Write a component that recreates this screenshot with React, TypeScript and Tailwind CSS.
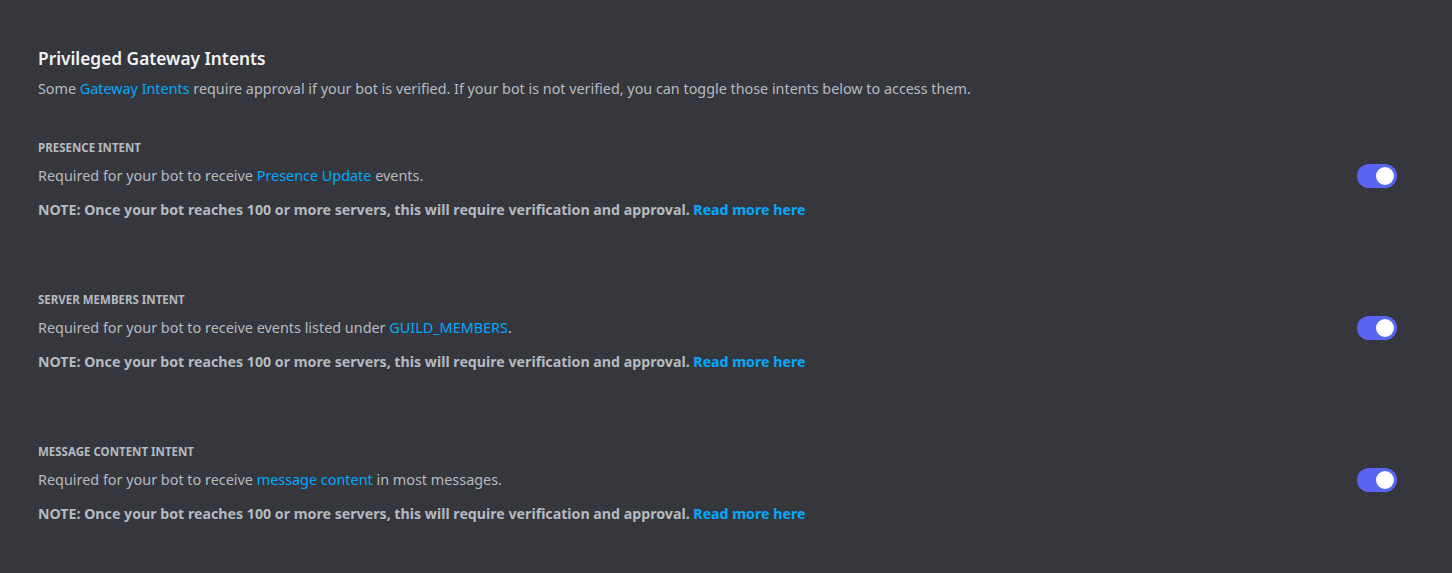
import React from "react";

const Toggle = () => (
  <div className="w-10 h-6 rounded-full bg-[#5865f2] flex items-center justify-end px-[3px] shrink-0">
    <div className="w-[18px] h-[18px] rounded-full bg-white" />
  </div>
);

const Link = ({ children }: { children: React.ReactNode }) => (
  <span className="text-[#00a8fc]">{children}</span>
);

const Note = () => (
  <p className="mt-[12px] text-[14.2px] leading-5 font-bold text-[#b5bac1]">
    NOTE: Once your bot reaches 100 or more servers, this will require verification and approval.{" "}
    <Link>Read more here</Link>
  </p>
);

const Section = ({ title, body }: { title: string; body: React.ReactNode }) => (
  <div>
    <div className="text-[11.5px] leading-4 font-bold uppercase text-[#b5bac1]">{title}</div>
    <div className="mt-[8px] flex items-center justify-between">
      <p className="text-[14.4px] leading-6 text-[#b5bac1]">{body}</p>
      <Toggle />
    </div>
    <Note />
  </div>
);

export default function App() {
  return (
    <div
      className="w-[1452px] h-[573px] bg-[#36373d] pl-[38px] pr-[55px] pt-[48px] overflow-hidden"
      style={{ fontFamily: '"Noto Sans", "Open Sans", sans-serif' }}
    >
      <h2 className="text-[17.3px] leading-[22px] font-semibold text-[#f2f3f5]">Privileged Gateway Intents</h2>
      <p className="mt-[10px] text-[14.35px] leading-[18px] text-[#b5bac1]">
        Some <Link>Gateway Intents</Link> require approval if your bot is verified. If your bot is not verified, you can toggle those intents below to access them.
      </p>
      <div className="mt-[42px] flex flex-col gap-[72px]">
        <Section title="Presence Intent" body={<>Required for your bot to receive <Link>Presence Update</Link> events.</>} />
        <Section title="Server Members Intent" body={<>Required for your bot to receive events listed under <Link>GUILD_MEMBERS</Link>.</>} />
        <Section title="Message Content Intent" body={<>Required for your bot to receive <Link>message content</Link> in most messages.</>} />
      </div>
    </div>
  );
}
